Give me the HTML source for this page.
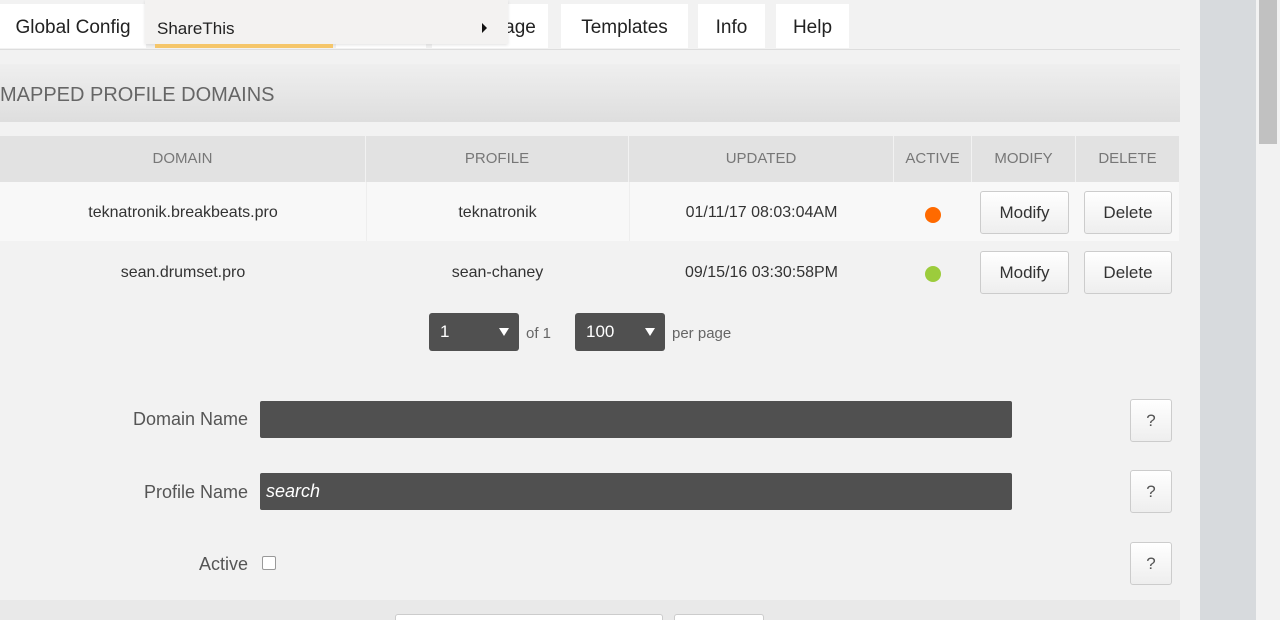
<!DOCTYPE html>
<html style="overflow:hidden"><head><style>
*{margin:0;padding:0;box-sizing:border-box}
body{width:1280px;height:620px;overflow:hidden;background:#f2f2f2;font-family:"Liberation Sans",sans-serif;color:#333;position:relative}
.abs{position:absolute}
.tab{position:absolute;top:4px;height:44px;background:#fff;font-size:19px;line-height:48px;text-align:center;color:#222}
.th{position:absolute;top:136px;height:46px;line-height:46px;font-size:15px;color:#777;text-align:center;border-right:1px solid #f2f2f2}
.td{position:absolute;font-size:16px;text-align:center;color:#333}
.btn{position:absolute;height:43px;background:linear-gradient(#fff,#eee);border:1px solid #ccc;border-radius:3px;font-size:17px;line-height:41px;text-align:center;color:#333}
.sel{position:absolute;top:313px;height:38px;background:#505050;border-radius:3px;color:#fff;font-size:17px;line-height:38px;padding-left:11px}
.sel:after{content:"";position:absolute;right:10px;top:15px;border-left:5px solid transparent;border-right:5px solid transparent;border-top:8px solid #fff}
.lbl{position:absolute;right:1032px;font-size:18px;color:#555}
.inp{position:absolute;left:260px;width:752px;height:37px;background:#505050;border-radius:2px}
.q{position:absolute;left:1130px;width:42px;height:43px;background:linear-gradient(#fff,#eee);border:1px solid #ccc;border-radius:3px;text-align:center;line-height:41px;font-size:17px;color:#555}
</style></head><body>
<div class="abs" style="left:0;top:49px;width:1180px;height:1px;background:#ddd"></div>
<div class="tab" style="left:0;width:146px">Global Config</div>
<div class="tab" style="left:336px;width:90px"></div>
<div class="tab" style="left:432px;width:116px;padding-left:60px">age</div>
<div class="tab" style="left:561px;width:127px">Templates</div>
<div class="tab" style="left:698px;width:67px">Info</div>
<div class="tab" style="left:776px;width:73px">Help</div>
<div class="abs" style="left:145px;top:0;width:363px;height:44px;background:#f3f2f1;box-shadow:0 1px 3px rgba(0,0,0,.12)"></div>
<div class="abs" style="left:157px;top:19px;font-size:17px;color:#222">ShareThis</div>
<div class="abs" style="left:482px;top:23px;border-top:5px solid transparent;border-bottom:5px solid transparent;border-left:5px solid #111"></div>
<div class="abs" style="left:155px;top:44px;width:178px;height:4px;background:#f5c66a"></div>
<div class="abs" style="left:0;top:64px;width:1180px;height:58px;background:linear-gradient(#efefef,#dedede)"></div>
<div class="abs" style="left:0;top:84px;font-size:20px;color:#666">MAPPED PROFILE DOMAINS</div>
<div class="abs" style="left:0;top:136px;width:1179px;height:46px;background:#e2e2e2"></div>
<div class="th" style="left:0;width:366px">DOMAIN</div>
<div class="th" style="left:366px;width:263px">PROFILE</div>
<div class="th" style="left:629px;width:265px">UPDATED</div>
<div class="th" style="left:894px;width:78px">ACTIVE</div>
<div class="th" style="left:972px;width:104px">MODIFY</div>
<div class="th" style="left:1076px;width:103px;border:none">DELETE</div>
<div class="abs" style="left:0;top:182px;width:1179px;height:59px;background:#f8f8f8"></div>
<div class="abs" style="left:366px;top:182px;width:1px;height:59px;background:#eee"></div>
<div class="abs" style="left:629px;top:182px;width:1px;height:59px;background:#eee"></div>
<div class="td" style="left:0;width:366px;top:204px">teknatronik.breakbeats.pro</div>
<div class="td" style="left:366px;width:263px;top:204px">teknatronik</div>
<div class="td" style="left:629px;width:265px;top:204px">01/11/17 08:03:04AM</div>
<div class="abs" style="left:925px;top:207px;width:16px;height:16px;border-radius:50%;background:#ff6a00"></div>
<div class="btn" style="left:980px;top:191px;width:89px">Modify</div>
<div class="btn" style="left:1084px;top:191px;width:88px">Delete</div>
<div class="td" style="left:0;width:366px;top:264px">sean.drumset.pro</div>
<div class="td" style="left:366px;width:263px;top:264px">sean-chaney</div>
<div class="td" style="left:629px;width:265px;top:264px">09/15/16 03:30:58PM</div>
<div class="abs" style="left:925px;top:266px;width:16px;height:16px;border-radius:50%;background:#9ccc3c"></div>
<div class="btn" style="left:980px;top:251px;width:89px">Modify</div>
<div class="btn" style="left:1084px;top:251px;width:88px">Delete</div>
<div class="sel" style="left:429px;width:90px">1</div>
<div class="abs" style="left:526px;top:325px;font-size:15px;color:#666">of 1</div>
<div class="sel" style="left:575px;width:90px">100</div>
<div class="abs" style="left:672px;top:325px;font-size:15px;color:#666">per page</div>
<div class="lbl" style="top:409px">Domain Name</div>
<div class="inp" style="top:401px"></div>
<div class="q" style="top:399px">?</div>
<div class="lbl" style="top:482px">Profile Name</div>
<div class="inp" style="top:473px"><span style="position:absolute;left:6px;top:8px;color:#fff;font-size:18px;font-style:italic">search</span></div>
<div class="q" style="top:470px">?</div>
<div class="lbl" style="top:554px">Active</div>
<div class="abs" style="left:262px;top:556px;width:14px;height:14px;border:1px solid #999;border-radius:2px;background:#fff"></div>
<div class="q" style="top:542px">?</div>
<div class="abs" style="left:0;top:600px;width:1180px;height:20px;background:#e9e9e9"></div>
<div class="abs" style="left:395px;top:614px;width:268px;height:6px;background:#fff;border:1px solid #ccc;border-bottom:none;border-radius:3px 3px 0 0"></div>
<div class="abs" style="left:674px;top:614px;width:90px;height:6px;background:#fff;border:1px solid #ccc;border-bottom:none;border-radius:3px 3px 0 0"></div>
<div class="abs" style="left:1200px;top:0;width:56px;height:620px;background:#d7dadd"></div>
<div class="abs" style="left:1259px;top:0;width:18px;height:144px;background:#c1c1c1"></div>
</body></html>
